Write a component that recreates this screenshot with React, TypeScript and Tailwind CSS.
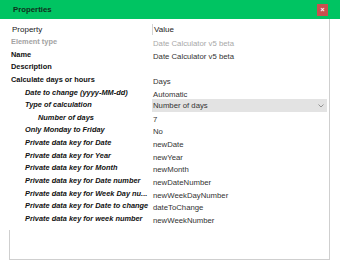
import React from "react";

type Row = { label: string; value?: string; indent: 0 | 1 | 2; italic?: boolean; muted?: boolean; select?: boolean };

const rows: Row[] = [
  { label: "Element type", value: "Date Calculator v5 beta", indent: 0, muted: true },
  { label: "Name", value: "Date Calculator v5 beta", indent: 0 },
  { label: "Description", value: "", indent: 0 },
  { label: "Calculate days or hours", value: "Days", indent: 0 },
  { label: "Date to change (yyyy-MM-dd)", value: "Automatic", indent: 1, italic: true },
  { label: "Type of calculation", value: "Number of days", indent: 1, italic: true, select: true },
  { label: "Number of days", value: "7", indent: 2, italic: true },
  { label: "Only Monday to Friday", value: "No", indent: 1, italic: true },
  { label: "Private data key for Date", value: "newDate", indent: 1, italic: true },
  { label: "Private data key for Year", value: "newYear", indent: 1, italic: true },
  { label: "Private data key for Month", value: "newMonth", indent: 1, italic: true },
  { label: "Private data key for Date number", value: "newDateNumber", indent: 1, italic: true },
  { label: "Private data key for Week Day nu...", value: "newWeekDayNumber", indent: 1, italic: true },
  { label: "Private data key for Date to change", value: "dateToChange", indent: 1, italic: true },
  { label: "Private data key for week number", value: "newWeekNumber", indent: 1, italic: true },
];

const indentCls = ["pl-[11px]", "pl-[25px]", "pl-[38px]"];

export default function App() {
  return (
    <div className="w-[340px] h-[260px] bg-white flex flex-col overflow-hidden" style={{ fontFamily: '"Liberation Sans", Arial, sans-serif' }}>
      <div className="h-[19px] bg-[#00c462] flex items-center justify-between pl-[13px] pr-[12px] shrink-0">
        <span className="text-[7.8px] text-[#10301c] font-semibold leading-none">Properties</span>
        <div className="w-[11px] h-[12px] bg-[#c9504f] flex items-center justify-center text-white text-[7px] leading-none font-bold">×</div>
      </div>
      <div className="w-[330px] flex-1 flex flex-col border-r border-[#cfcfcf]">
        <div className="h-[16px] flex items-center mt-[1px] pt-[3px] text-[8px] text-[#222]">
          <div className="w-[152px] pl-[12px] leading-none">Property</div>
          <div className="w-px h-[11px] bg-[#d4d4d4]" />
          <div className="pl-[1px] leading-none">Value</div>
        </div>
        {rows.map((r) => (
          <div key={r.label} className="h-[12.65px] flex">
            <div
              className={`w-[152px] shrink-0 ${indentCls[r.indent]} text-[7.4px] font-bold leading-[12.65px] whitespace-nowrap ${r.italic ? "italic" : ""} ${r.muted ? "text-[#a3a3a3]" : "text-[#111]"}`}
            >
              {r.label}
            </div>
            {r.select ? (
              <div className="flex-1 mr-[2px] h-[13px] bg-[#e3e3e3] flex items-end justify-between pl-[1px] pr-[3px] pb-[2px] relative z-10">
                <span className="text-[7.75px] leading-none text-[#333]">{r.value}</span>
                <svg width="6" height="4" viewBox="0 0 6 4" className="mb-[2px]">
                  <path d="M0.5 0.5 L3 3 L5.5 0.5" fill="none" stroke="#8a8a8a" strokeWidth="0.9" />
                </svg>
              </div>
            ) : (
              <div className={`flex-1 pl-[1px] pt-[2px] text-[7.75px] leading-[12.65px] whitespace-nowrap ${r.muted ? "text-[#a8a8a8]" : "text-[#333]"}`}>
                {r.value}
              </div>
            )}
          </div>
        ))}
        <div className="flex-1 ml-[9px] mt-[4px] border-l border-b border-[#cfcfcf]" />
      </div>
    </div>
  );
}
